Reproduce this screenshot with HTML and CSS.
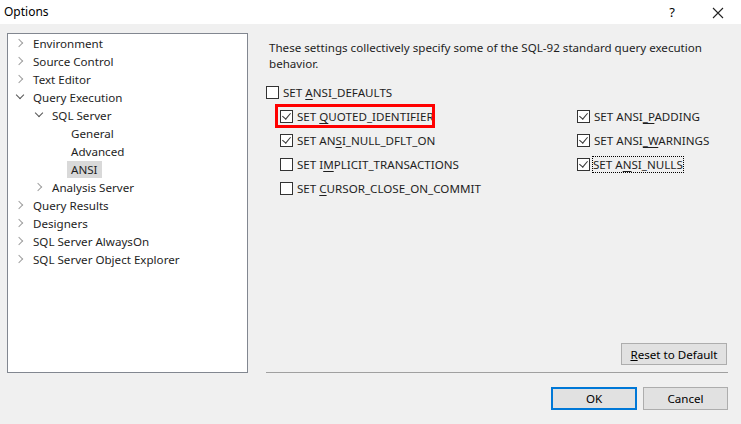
FILE: index.html
```html
<!DOCTYPE html>
<html>
<head>
<meta charset="utf-8">
<link rel="stylesheet" href="styles.css">
</head>
<body>
<div class="window">
  <div class="titlebar">
    <span class="title">Options</span>
    <span class="help">?</span>
    <span class="close"><svg width="12" height="12" viewBox="0 0 12 12"><path d="M1 1L11 11M11 1L1 11" stroke="#222" stroke-width="1.1" fill="none"/></svg></span>
  </div>
  <div class="body">
    <div class="tree">
      <div class="node l0"><span class="arr r"></span><span class="lbl">Environment</span></div>
      <div class="node l0"><span class="arr r"></span><span class="lbl">Source Control</span></div>
      <div class="node l0"><span class="arr r"></span><span class="lbl">Text Editor</span></div>
      <div class="node l0"><span class="arr d"></span><span class="lbl">Query Execution</span></div>
      <div class="node l1"><span class="arr d"></span><span class="lbl">SQL Server</span></div>
      <div class="node l2"><span class="arr"></span><span class="lbl">General</span></div>
      <div class="node l2"><span class="arr"></span><span class="lbl">Advanced</span></div>
      <div class="node l2"><span class="arr"></span><span class="lbl sel">ANSI</span></div>
      <div class="node l1"><span class="arr r"></span><span class="lbl">Analysis Server</span></div>
      <div class="node l0"><span class="arr r"></span><span class="lbl">Query Results</span></div>
      <div class="node l0"><span class="arr r"></span><span class="lbl">Designers</span></div>
      <div class="node l0"><span class="arr r"></span><span class="lbl">SQL Server AlwaysOn</span></div>
      <div class="node l0"><span class="arr r"></span><span class="lbl">SQL Server Object Explorer</span></div>
    </div>
    <div class="content">
      <p class="desc">These settings collectively specify some of the SQL-92 standard query execution behavior.</p>
      <div class="opts">
        <div class="row top"><span class="cb"></span><span class="txt">SET <u>A</u>NSI_DEFAULTS</span></div>
        <div class="cols">
          <div class="col">
            <div class="row hl"><span class="cb on"></span><span class="txt">SET <u>Q</u>UOTED_IDENTIFIER</span></div>
            <div class="row"><span class="cb on"></span><span class="txt">SET AN<u>S</u>I_NULL_DFLT_ON</span></div>
            <div class="row"><span class="cb"></span><span class="txt">SET I<u>M</u>PLICIT_TRANSACTIONS</span></div>
            <div class="row"><span class="cb"></span><span class="txt">SET <u>C</u>URSOR_CLOSE_ON_COMMIT</span></div>
          </div>
          <div class="col right">
            <div class="row"><span class="cb on"></span><span class="txt">SET ANSI<u>_P</u>ADDING</span></div>
            <div class="row"><span class="cb on"></span><span class="txt">SET ANSI<u>_W</u>ARNINGS</span></div>
            <div class="row"><span class="cb on"></span><span class="txt focus">SET A<u>N</u>SI_NULLS</span></div>
          </div>
        </div>
      </div>
      <div class="spacer"></div>
      <div class="resetrow"><button class="btn reset"><u>R</u>eset to Default</button></div>
      <div class="sep"></div>
    </div>
  </div>
  <div class="footer">
    <button class="btn ok">OK</button>
    <button class="btn cancel">Cancel</button>
  </div>
</div>
</body>
</html>
```
FILE: styles.css
```css
html, body {
  margin: 0;
  padding: 0;
  background: #f0f0f0;
  width: 741px;
  height: 424px;
  overflow: hidden;
}
body {
  font-family: "Noto Sans", "Noto Sans CJK KR", sans-serif;
  font-size: 11.6px;
  color: #000;
}
.window {
  display: flex;
  flex-direction: column;
  height: 424px;
}
.titlebar {
  height: 24px;
  background: #fff;
  display: flex;
  align-items: center;
}
.title {
  margin-left: 4px;
  font-size: 12px;
  margin-top: -2px;
}
.help {
  margin-left: auto;
  margin-right: 37px;
  font-size: 13px;
}
.close {
  margin-right: 17px;
  display: flex;
  margin-top: 2px;
}
.body {
  display: flex;
  padding: 9px 13px 0 7px;
  gap: 18px;
  height: 340px;
}
.tree {
  flex: none;
  width: 239px;
  height: 338px;
  border: 1px solid #828790;
  background: #fff;
  padding-top: 0;
}
.node {
  height: 18px;
  display: flex;
  align-items: center;
  color: #1e1e1e;
  white-space: nowrap;
}
.node.l0 { padding-left: 9px; }
.node.l1 { padding-left: 28px; }
.node.l2 { padding-left: 47px; }
.arr {
  flex: none;
  width: 8px;
  height: 10px;
  margin-right: 8px;
  position: relative;
}
.arr.r::before {
  content: "";
  position: absolute;
  left: -1px;
  top: 2px;
  width: 5px;
  height: 5px;
  border-right: 1.5px solid #a0a0a0;
  border-bottom: 1.5px solid #a0a0a0;
  transform: rotate(-45deg);
}
.arr.d::before {
  content: "";
  position: absolute;
  left: 0px;
  top: 0px;
  width: 5px;
  height: 5px;
  border-right: 1.5px solid #555;
  border-bottom: 1.5px solid #555;
  transform: rotate(45deg);
}
.lbl {
  padding: 0 4px;
  margin-left: -4px;
  line-height: 17px;
}
.lbl.sel {
  background: #d9d9d9;
}
.content {
  flex: 1;
  min-width: 0;
  display: flex;
  flex-direction: column;
}
.desc {
  margin: 7px 0 0 3px;
  line-height: 16px;
  color: #1e1e1e;
  width: 450px;
}
.opts {
  margin-top: 8px;
}
.row {
  height: 24px;
  display: flex;
  align-items: center;
  position: relative;
}
.cols {
  display: flex;
}
.col {
  padding-left: 14px;
  width: 297px;
}
.col.right {
  padding-left: 0;
  width: auto;
}
.cb {
  width: 11px;
  height: 11px;
  border: 1px solid #333;
  background: #fff;
  margin-right: 4px;
  position: relative;
  flex: none;
}
.cb.on::after {
  content: "";
  position: absolute;
  left: 3px;
  top: 0px;
  width: 4px;
  height: 7px;
  border-right: 1.3px solid #333;
  border-bottom: 1.3px solid #333;
  transform: rotate(40deg);
}
.txt {
  color: #1e1e1e;
  white-space: nowrap;
}
.txt u {
  text-decoration-thickness: 1px;
  text-underline-offset: 2px;
}
.txt.focus {
  outline: 1px dotted #000;
  outline-offset: 0px;
  margin-left: -1px;
}
.row.hl::before {
  content: "";
  position: absolute;
  left: -5px;
  top: 0px;
  width: 154px;
  height: 18px;
  border: 3px solid #ff0000;
}
.spacer { flex: 1; }
.resetrow {
  display: flex;
  justify-content: flex-end;
  margin-right: 1px;
}
.btn {
  font-family: "Noto Sans", "Noto Sans CJK KR", sans-serif;
  font-size: 11.6px;
  background: #e1e1e1;
  border: 1px solid #adadad;
  color: #000;
  padding: 0;
  margin: 0;
}
.reset {
  width: 106px;
  height: 22px;
  margin-bottom: 1px;
}
.sep {
  height: 1px;
  background: #a0a0a0;
  margin-top: 6px;
}
.footer {
  display: flex;
  justify-content: flex-end;
  padding: 14px 13px 0 0;
  gap: 6px;
}
.ok {
  width: 86px;
  height: 23px;
  border: 2px solid #0078d7;
}
.cancel {
  width: 85px;
  height: 23px;
}
```
